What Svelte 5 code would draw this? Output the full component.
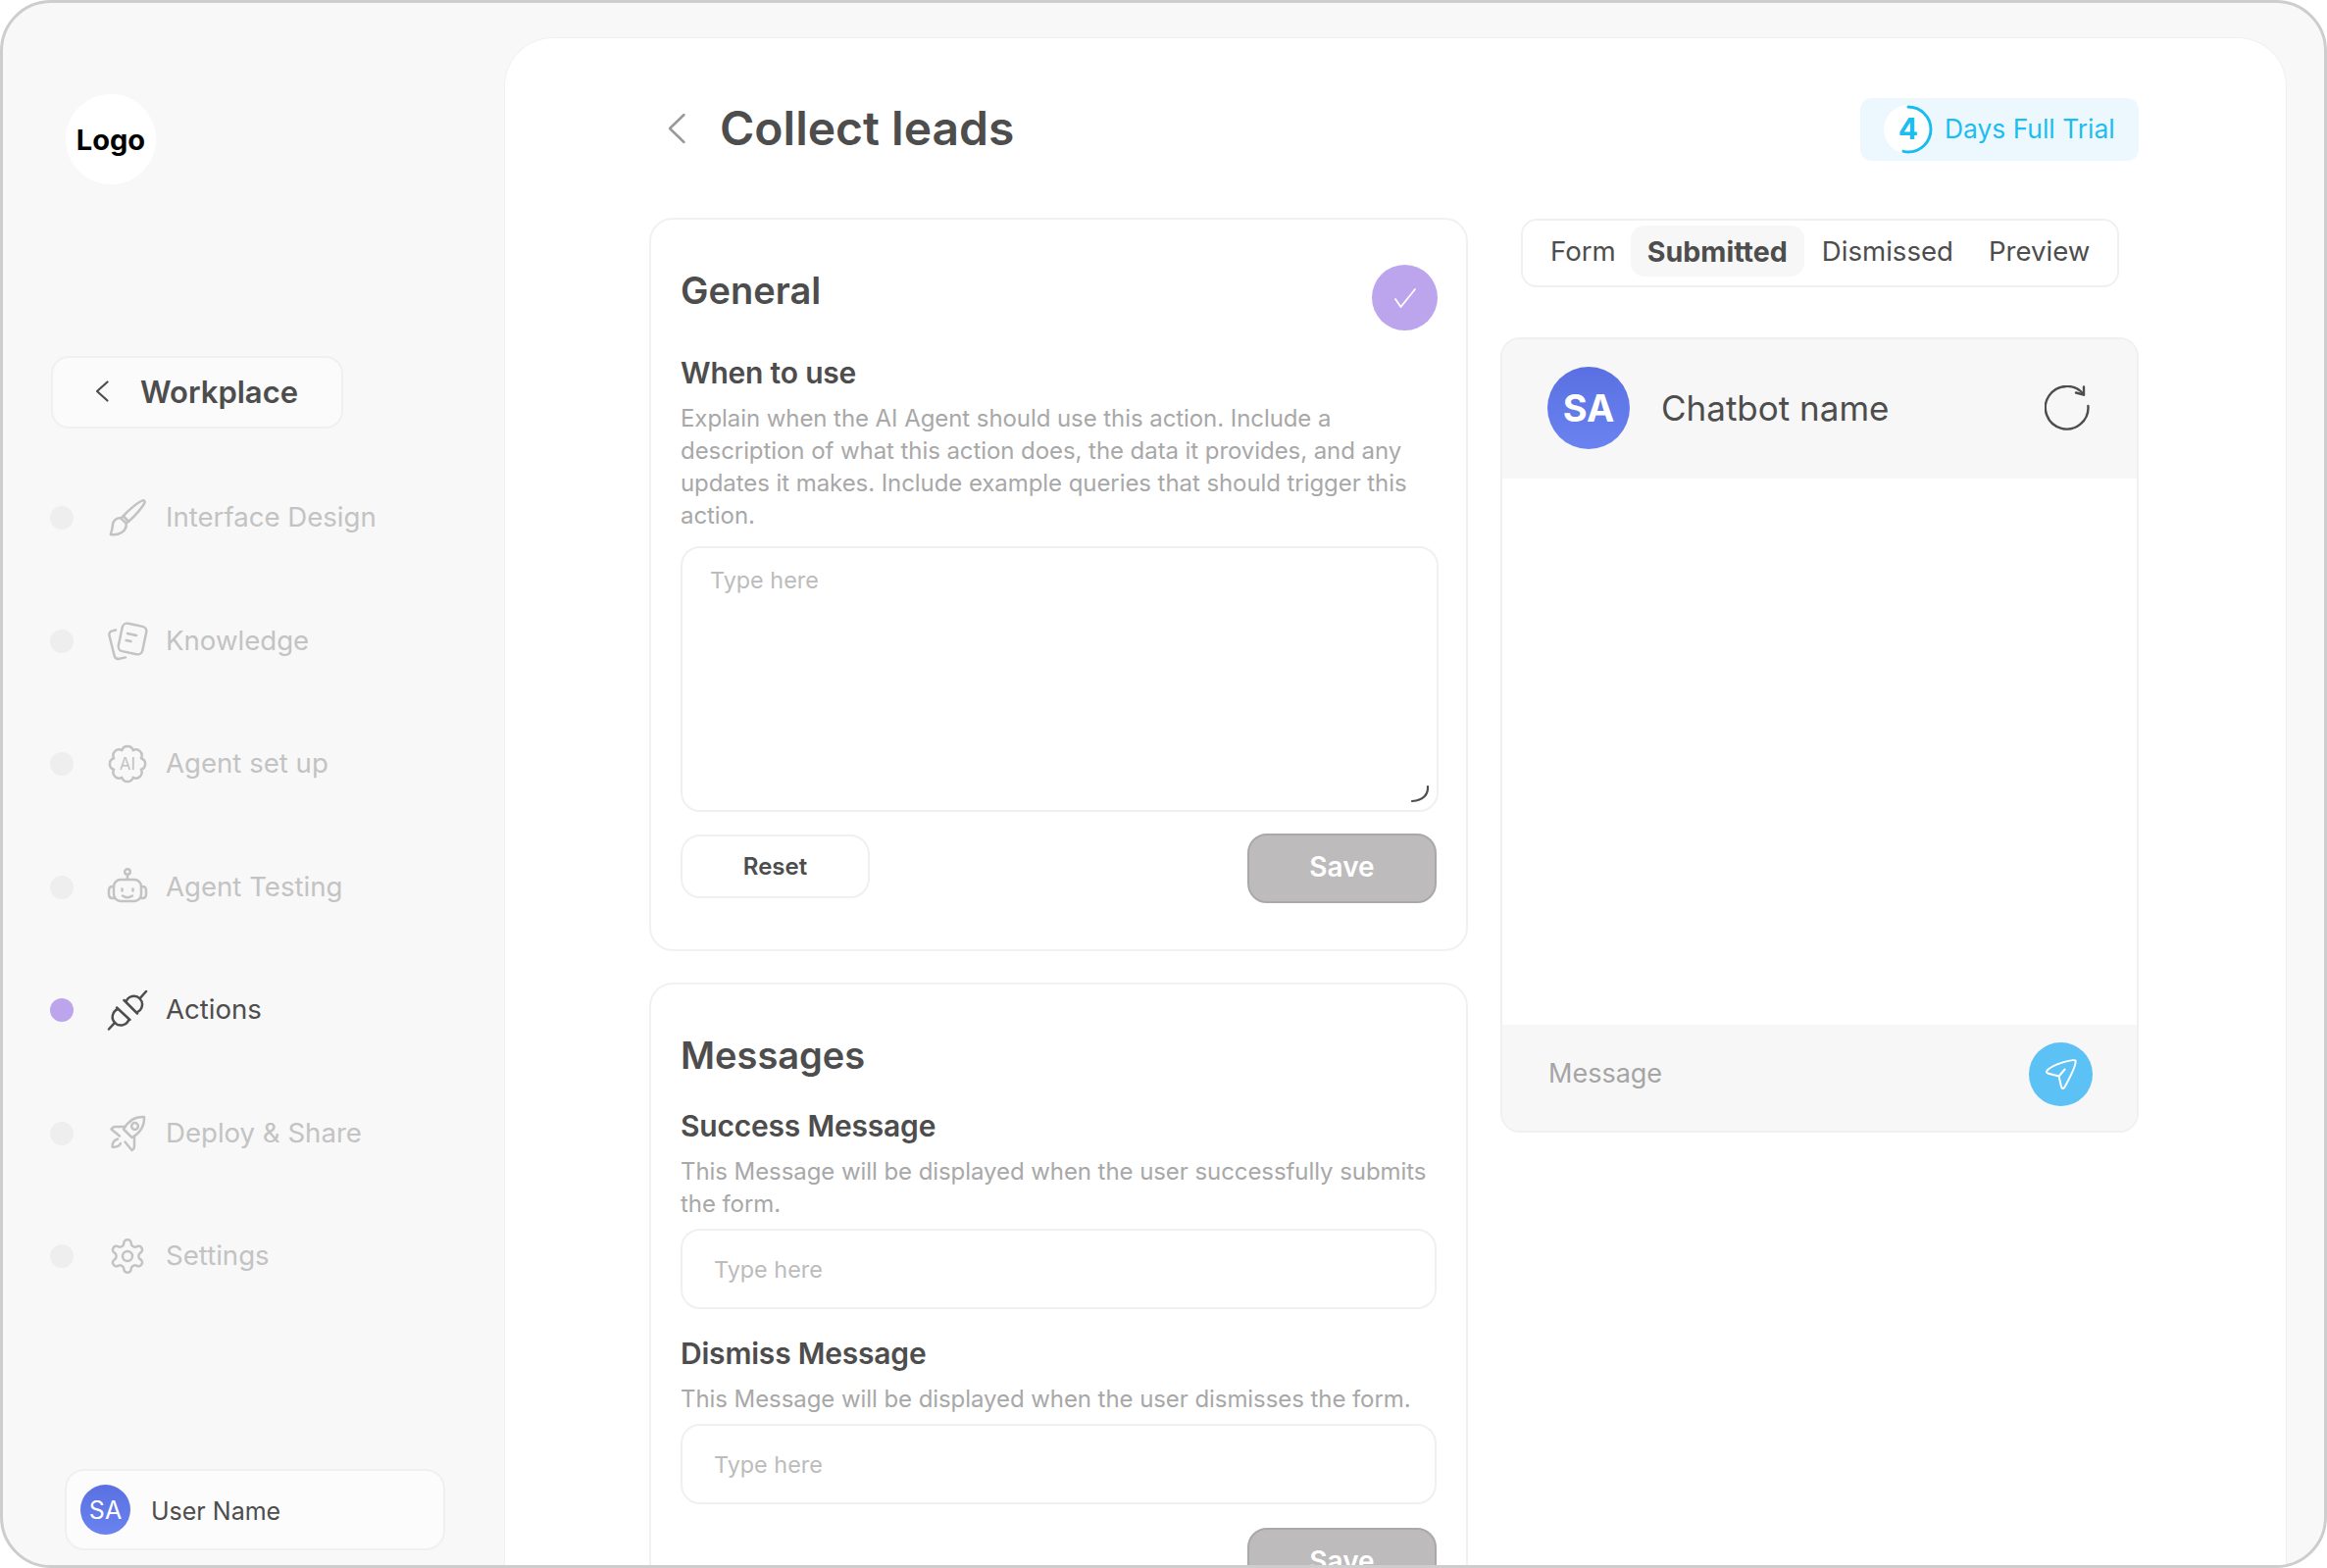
<script lang="ts">
	const nav = [
		{ key: 'brush', label: 'Interface Design' },
		{ key: 'docs', label: 'Knowledge' },
		{ key: 'ai', label: 'Agent set up' },
		{ key: 'bot', label: 'Agent Testing' },
		{ key: 'plug', label: 'Actions', active: true },
		{ key: 'rocket', label: 'Deploy & Share' },
		{ key: 'gear', label: 'Settings' }
	];

	const tabs = ['Form', 'Submitted', 'Dismissed', 'Preview'];
	let activeTab = $state('Submitted');

	// scalloped outline for the AI badge icon
	function scallop(lobes: number, r: number, cx = 20, cy = 20) {
		let d = '';
		for (let i = 0; i <= lobes; i++) {
			const a = (i / lobes) * Math.PI * 2 - Math.PI / 2 - Math.PI / lobes;
			const x = (cx + r * Math.cos(a)).toFixed(2);
			const y = (cy + r * Math.sin(a)).toFixed(2);
			d += i === 0 ? `M${x} ${y}` : `A6 6 0 0 1 ${x} ${y}`;
		}
		return d + 'Z';
	}
</script>

<div class="frame">
	<aside class="sidebar">
		<div class="logo">Logo</div>

		<button type="button" class="workplace">
			<svg width="14" height="22" viewBox="0 0 14 22" fill="none" stroke="#4d4d4d" stroke-width="2.2" stroke-linecap="round" stroke-linejoin="round"><path d="M12.5 1.5 2 11l10.5 9.500" /></svg>
			<span>Workplace</span>
		</button>

		<nav class="nav">
			{#each nav as item}
				<div class="nav__row" class:nav__row--active={item.active}>
					<span class="nav__dot"></span>
					<svg class="nav__icon" width="40" height="40" viewBox="0 0 40 40" fill="none" stroke="currentColor" stroke-width="2.5" stroke-linecap="round" stroke-linejoin="round">
						{#if item.key === 'brush'}
							<path d="M35.5 2.4C31 4 21 12 15.6 18.4l5.6 5.4C27.5 18.4 36 8.4 37.600 4.6c.5-1.4-.8-2.7-2.100-2.200Z" />
							<path d="M13 20.4c-4.200-.4-7.600 2.400-8 6.400-.3 3.600-1 7-2.200 10.200 3.600.7 7.800.2 11.200-2 3.600-2.300 5.200-6 4.600-9.400Z" />
							<path d="m13 20.4 2.600-2 5.600 5.400-2.600 1.800" />
						{:else if item.key === 'docs'}
							<rect x="12.5" y="3" width="25" height="29" rx="5" transform="rotate(12 25 17.5)" />
							<path d="m20 12 9 2M18.600 19l5 1" />
							<path d="M8 8.500 4.600 9.400C2 10 .9 11.800 1.500 14.200l5 20c.7 2.800 2.600 4.200 5.200 3.600l6.300-1.400" />
						{:else if item.key === 'ai'}
							<path d={scallop(8, 15)} />
							<text x="20" y="26" class="nav__ai">AI</text>
						{:else if item.key === 'bot'}
							<rect x="6" y="12" width="28" height="22" rx="7" />
							<circle cx="20" cy="4" r="2.800" />
							<path d="M20 6.800V12M6 19H5c-2.500 0-4 1.500-4 4v4c0 2.500 1.500 4 4 4h1M34 19h1c2.500 0 4 1.500 4 4v4c0 2.500-1.500 4-4 4h-1M14.500 21.500v2M25.500 21.500v2M15 28.500c3 2 7 2 10 0" />
						{:else if item.key === 'plug'}
							<path d="M9 17.500 22.500 30M10.500 19A8.500 8.500 0 1 0 21.500 29M7.300 32.700 1 39.500" />
							<path d="M16.500 10 30 23.500M18.500 11.500A8.500 8.500 0 1 1 29 22.500M32.500 8.300 39 1" />
						{:else if item.key === 'rocket'}
							<path d="M37 3C28 2.400 20.500 7.500 16 15.500l8.500 8.500C32.500 20 37.600 12 37 3Z" />
							<circle cx="27.500" cy="12.500" r="3.400" />
							<path d="M17.500 13H7c-1.500 0-2.500.8-3.500 2.500l8.500 7" />
							<path d="M27 22.500V33c0 1.500-.8 3-2.500 4l-7-8.500" />
							<path d="M10 25.500c-3.500 1-5.500 4-5.500 8 3.500.5 7-.5 8.500-3.500" />
						{:else if item.key === 'gear'}
							<g transform="scale(1.667)" stroke-width="1.500">
								<path d="M12.220 2h-.44a2 2 0 0 0-2 2v.18a2 2 0 0 1-1 1.730l-.43.25a2 2 0 0 1-2 0l-.15-.08a2 2 0 0 0-2.730.73l-.22.38a2 2 0 0 0 .73 2.730l.15.1a2 2 0 0 1 1 1.720v.51a2 2 0 0 1-1 1.740l-.15.09a2 2 0 0 0-.73 2.730l.22.38a2 2 0 0 0 2.730.73l.15-.08a2 2 0 0 1 2 0l.43.25a2 2 0 0 1 1 1.730V20a2 2 0 0 0 2 2h.44a2 2 0 0 0 2-2v-.18a2 2 0 0 1 1-1.730l.43-.25a2 2 0 0 1 2 0l.15.08a2 2 0 0 0 2.730-.73l.22-.39a2 2 0 0 0-.73-2.730l-.15-.08a2 2 0 0 1-1-1.740v-.5a2 2 0 0 1 1-1.740l.15-.09a2 2 0 0 0 .73-2.730l-.22-.38a2 2 0 0 0-2.730-.73l-.15.08a2 2 0 0 1-2 0l-.43-.25a2 2 0 0 1-1-1.730V4a2 2 0 0 0-2-2z" />
								<circle cx="12" cy="12" r="3" />
							</g>
						{/if}
					</svg>
					<span class="nav__label">{item.label}</span>
				</div>
			{/each}
		</nav>

		<div class="user">
			<span class="user__avatar">SA</span>
			<span class="user__name">User Name</span>
		</div>
	</aside>

	<main class="panel">
		<header class="topbar">
			<div class="topbar__title">
				<svg width="20" height="32" viewBox="0 0 20 32" fill="none" stroke="#999" stroke-width="2.500" stroke-linecap="round" stroke-linejoin="round"><path d="M17.500 2 3 16l14.500 14" /></svg>
				<h1>Collect leads</h1>
			</div>
			<div class="trial">
				<span class="trial__ring">
					<svg width="50" height="50" viewBox="0 0 50 50" fill="none"><path d="M25 2a23 23 0 0 1 0 46 23 23 0 0 1-5-.6" stroke="#17bdf0" stroke-width="3" stroke-linecap="round" /></svg>
					<b>4</b>
				</span>
				<span class="trial__text">Days Full Trial</span>
			</div>
		</header>

		<div class="columns">
			<div class="forms">
				<section class="card card--general">
					<div class="card__head">
						<h2>General</h2>
						<span class="check">
							<svg width="26" height="26" viewBox="0 0 26 26" fill="none" stroke="#fff" stroke-width="1.800" stroke-linecap="round" stroke-linejoin="round"><path d="m3 14 5.500 8L23 4" /></svg>
						</span>
					</div>
					<h3>When to use</h3>
					<p>Explain when the AI Agent should use this action. Include a description of what this action does, the data it provides, and any updates it makes. Include example queries that should trigger this action.</p>
					<div class="area">
						<textarea placeholder="Type here"></textarea>
						<svg class="area__grip" width="20" height="20" viewBox="0 0 20 20" fill="none" stroke="#4d4d4d" stroke-width="2.200" stroke-linecap="round"><path d="M18 2c.6 8-4.500 14.500-16 15" /></svg>
					</div>
					<div class="actions">
						<button type="button" class="btn btn--ghost">Reset</button>
						<button type="button" class="btn btn--save">Save</button>
					</div>
				</section>

				<section class="card card--messages">
					<h2>Messages</h2>
					<h3>Success Message</h3>
					<p>This Message will be displayed when the user successfully submits the form.</p>
					<input type="text" placeholder="Type here" />
					<h3 class="after-input">Dismiss Message</h3>
					<p>This Message will be displayed when the user dismisses the form.</p>
					<input type="text" placeholder="Type here" />
					<div class="actions actions--end">
						<button type="button" class="btn btn--save">Save</button>
					</div>
				</section>
			</div>

			<div class="side">
				<div class="tabs">
					{#each tabs as tab}
						<button type="button" class="tabs__tab" class:tabs__tab--active={tab === activeTab} onclick={() => (activeTab = tab)}>{tab}</button>
					{/each}
				</div>

				<div class="chat">
					<div class="chat__head">
						<span class="chat__avatar">SA</span>
						<span class="chat__name">Chatbot name</span>
						<svg width="46" height="46" viewBox="0 0 46 46" fill="none" stroke="#4d4d4d" stroke-width="2.400" stroke-linecap="round" stroke-linejoin="round"><path d="M40 9.500A21.800 21.800 0 1 0 44.400 21" /><path d="M40 1.500v8l-8-2" /></svg>
					</div>
					<div class="chat__body"></div>
					<div class="chat__foot">
						<span class="chat__placeholder">Message</span>
						<span class="chat__send">
							<svg width="34" height="34" viewBox="0 0 34 34" fill="none" stroke="#fff" stroke-width="2" stroke-linecap="round" stroke-linejoin="round"><path d="M31.500 3.400C27 2 9 7.500 2.600 13.500c-1.200 1.500-.4 2.800 1.400 3.300L14.600 19.500 17 30c.6 2.400 2.400 2.600 3.500.6C25 22 33 8.500 31.500 3.400Z" /><path d="m14.600 19.500 6-7" /></svg>
						</span>
					</div>
				</div>
			</div>
		</div>
	</main>
</div>

<style>
	:global(body) {
		margin: 0;
		background: #fff;
	}

	.frame {
		box-sizing: border-box;
		width: 2373px;
		height: 1599px;
		display: flex;
		overflow: hidden;
		background: #f8f8f8;
		border: 3px solid #cdcdcd;
		border-radius: 52px;
		font-family: Inter, "Noto Sans", sans-serif;
		color: #4d4d4d;
	}

	button {
		font: inherit;
		color: inherit;
	}

	/* sidebar */
	.sidebar {
		flex: 0 0 511px;
		display: flex;
		flex-direction: column;
		align-items: flex-start;
		box-sizing: border-box;
		padding: 93px 0 15px 48px;
	}

	.logo {
		width: 92px;
		height: 92px;
		margin-left: 16px;
		display: flex;
		align-items: center;
		justify-content: center;
		background: #fff;
		border-radius: 50%;
		font-size: 29px;
		font-weight: 700;
		color: #000;
	}

	.workplace {
		box-sizing: border-box;
		width: 298px;
		height: 74px;
		margin: 175px 0 0 1px;
		padding: 0 0 2px 43px;
		display: flex;
		align-items: center;
		gap: 32px;
		background: #fbfbfb;
		border: 2px solid #f0f0f0;
		border-radius: 18px;
		font-size: 31px;
		font-weight: 600;
	}

	.nav {
		margin-top: 71px;
		display: flex;
		flex-direction: column;
		gap: 85.5px;
	}

	.nav__row {
		height: 40px;
		display: flex;
		align-items: center;
		color: #c3c3c3;
		font-size: 27.6px;
	}

	.nav__row--active {
		color: #4d4d4d;
	}

	.nav__dot {
		width: 24px;
		height: 24px;
		margin-right: 35px;
		border-radius: 50%;
		background: #eeeeee;
	}

	.nav__row--active .nav__dot {
		background: #bca5ec;
	}

	.nav__icon {
		margin-right: 19px;
		flex-shrink: 0;
		overflow: visible;
	}

	.nav__label {
		padding-bottom: 2px;
	}

	.nav__ai {
		fill: currentColor;
		stroke: none;
		font-size: 17px;
		font-weight: 400;
		text-anchor: middle;
	}

	.user {
		box-sizing: border-box;
		width: 388px;
		height: 83px;
		margin: auto 0 0 15px;
		padding-left: 14px;
		display: flex;
		align-items: center;
		gap: 21px;
		background: #fcfcfc;
		border: 2px solid #f0f0f0;
		border-radius: 20px;
		font-size: 25px;
	}

	.user__avatar {
		width: 51px;
		height: 51px;
		display: flex;
		align-items: center;
		justify-content: center;
		border-radius: 50%;
		background: linear-gradient(180deg, #5a70e2, #6a83f0);
		color: #fff;
		font-size: 25px;
	}

	.user__name {
		padding-top: 2px;
	}

	/* main panel */
	.panel {
		box-sizing: border-box;
		width: 1818px;
		margin-top: 35px;
		padding: 61px 150px 0 148px;
		background: #fff;
		border: 1px solid #f0f0f0;
		border-bottom: none;
		border-radius: 50px 50px 0 0;
	}

	.topbar {
		height: 64px;
		display: flex;
		align-items: center;
		justify-content: space-between;
	}

	.topbar__title {
		display: flex;
		align-items: center;
		gap: 34px;
		padding: 0 0 3px 17px;
	}

	h1 {
		margin: 0;
		font-size: 48px;
		font-weight: 600;
	}

	.trial {
		box-sizing: border-box;
		width: 284px;
		height: 64px;
		padding-left: 24px;
		display: flex;
		align-items: center;
		gap: 12px;
		background: #ecf8fd;
		border-radius: 12px;
		color: #1dbdf0;
		font-size: 26.4px;
	}

	.trial__ring {
		position: relative;
		width: 50px;
		height: 50px;
		display: flex;
		align-items: center;
		justify-content: center;
		background: #fff;
		border-radius: 50%;
	}

	.trial__ring svg {
		position: absolute;
		inset: 0;
	}

	.trial__ring b {
		padding-bottom: 2px;
		font-size: 30px;
		font-weight: 700;
	}

	.trial__text {
		padding-bottom: 3px;
	}

	.columns {
		margin-top: 59px;
		display: flex;
		gap: 33px;
	}

	.forms {
		flex: 0 0 835px;
		margin: -1px 0 0 -1px;
		display: flex;
		flex-direction: column;
		gap: 32px;
	}

	.side {
		flex: 0 0 651px;
	}

	.card {
		box-sizing: border-box;
		padding: 46px 30px 47px;
		border: 2px solid #f1f1f1;
		border-radius: 24px;
		background: #fff;
	}

	.card__head {
		display: flex;
		justify-content: space-between;
	}

	.check {
		width: 67px;
		height: 67px;
		margin-right: -1px;
		display: flex;
		align-items: center;
		justify-content: center;
		border-radius: 50%;
		background: #bca5ec;
	}

	h2 {
		margin: 0;
		font-size: 38px;
		line-height: 52px;
		font-weight: 600;
	}

	h3 {
		margin: 23px 0 0;
		font-size: 30px;
		line-height: 40px;
		font-weight: 600;
		letter-spacing: -0.2px;
	}

	.card--messages h3:first-of-type {
		margin-top: 26px;
	}

	h3.after-input {
		margin-top: 25px;
	}

	p {
		margin: 10px 0 0;
		font-size: 24px;
		line-height: 33px;
		letter-spacing: -0.07px;
		color: #a8a8a8;
	}

	.area {
		position: relative;
		width: calc(100% + 2px);
		margin-top: 15px;
	}

	textarea,
	input {
		display: block;
		box-sizing: border-box;
		width: 100%;
		background: #fff;
		border: 2px solid #f0f0f0;
		border-radius: 20px;
		outline: none;
		font-family: inherit;
		font-size: 23.4px;
		color: #4d4d4d;
	}

	textarea::placeholder,
	input::placeholder {
		color: #bcbcbc;
		opacity: 1;
	}

	textarea {
		height: 271px;
		padding: 18px 28px;
		line-height: 30px;
		resize: none;
	}

	input {
		height: 82px;
		margin-top: 9px;
		padding: 0 32px;
	}

	.area__grip {
		position: absolute;
		right: 9px;
		bottom: 8px;
	}

	.actions {
		margin-top: 23px;
		display: flex;
		justify-content: space-between;
		align-items: flex-start;
	}

	.actions--end {
		margin-top: 25px;
		justify-content: flex-end;
	}

	.btn {
		box-sizing: border-box;
		width: 193px;
		border-radius: 20px;
		font-weight: 600;
	}

	.btn--ghost {
		height: 65px;
		background: #fff;
		border: 2px solid #f0f0f0;
		font-size: 24px;
	}

	.btn--save {
		height: 71px;
		margin-top: -1px;
		padding-bottom: 4px;
		background: #bdbbbb;
		border: 2px solid #a9a9a9;
		color: #fff;
		font-size: 28px;
		line-height: 30px;
	}

	.tabs {
		box-sizing: border-box;
		width: 610px;
		height: 70px;
		margin-left: 21px;
		padding: 0 0 4px 10px;
		display: flex;
		align-items: center;
		background: #fff;
		border: 2px solid #f0f0f0;
		border-radius: 16px;
	}

	.tabs__tab {
		height: 52px;
		padding: 0 18px;
		background: none;
		border: none;
		border-radius: 14px;
		font-size: 27.6px;
		white-space: nowrap;
	}

	.tabs__tab:first-child {
		margin-right: -3px;
	}

	.tabs__tab--active {
		padding: 0 17px;
		background: #f7f7f7;
		font-size: 28.6px;
		font-weight: 700;
	}

	.chat {
		box-sizing: border-box;
		height: 811px;
		margin-top: 51px;
		display: flex;
		flex-direction: column;
		overflow: hidden;
		background: #fff;
		border: 2px solid #f0f0f0;
		border-radius: 20px;
	}

	.chat__head {
		box-sizing: border-box;
		height: 142px;
		padding: 0 48px 3px 46px;
		display: flex;
		align-items: center;
		background: #f7f7f7;
	}

	.chat__avatar {
		width: 84px;
		height: 84px;
		display: flex;
		align-items: center;
		justify-content: center;
		border-radius: 50%;
		background: linear-gradient(180deg, #5a70e2, #6a83f0);
		color: #fff;
		font-size: 38px;
		font-weight: 700;
	}

	.chat__name {
		flex: 1;
		margin-left: 32px;
		font-size: 35px;
	}

	.chat__body {
		flex: 1;
	}

	.chat__foot {
		box-sizing: border-box;
		height: 108px;
		padding: 0 45px 8px 47px;
		display: flex;
		align-items: center;
		justify-content: space-between;
		background: #f7f7f7;
	}

	.chat__placeholder {
		padding-bottom: 2px;
		font-size: 27px;
		color: #a5a5a5;
	}

	.chat__send {
		width: 65px;
		height: 65px;
		display: flex;
		align-items: center;
		justify-content: center;
		border-radius: 50%;
		background: #5cc2f5;
	}
</style>
